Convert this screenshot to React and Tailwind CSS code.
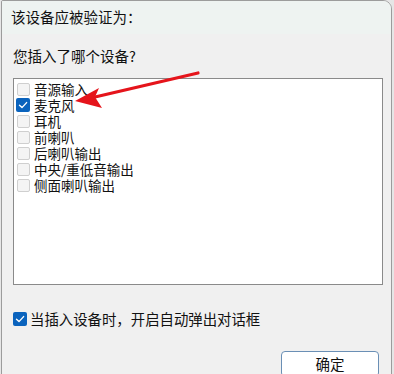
import React from "react";

const font = { fontFamily: '"Noto Sans CJK SC", "Microsoft YaHei", sans-serif' };

function Box({ checked }) {
  if (checked) {
    return (
      <span className="w-[14px] h-[14px] rounded-[2px] bg-[#0a63bd] flex items-center justify-center shrink-0">
        <svg width="10" height="10" viewBox="0 0 10 10">
          <path d="M1.5 5.2 L4 7.6 L8.6 2.6" fill="none" stroke="#fff" strokeWidth="1.4" strokeLinecap="round" strokeLinejoin="round" />
        </svg>
      </span>
    );
  }
  return <span className="w-[13px] h-[13px] rounded-[2px] border border-[#cfcfcf] bg-[#f4f4f4] shrink-0" />;
}

const items = [
  ["音源输入", false],
  ["麦克风", true],
  ["耳机", false],
  ["前喇叭", false],
  ["后喇叭输出", false],
  ["中央/重低音输出", false],
  ["侧面喇叭输出", false],
];

export default function App() {
  return (
    <div className="w-[394px] h-[374px] bg-[#e6e6e6] overflow-hidden relative" style={font}>
      <div className="ml-[1px] w-[391px] h-[380px] border border-[#9c9c9c] rounded-tr-[9px] rounded-tl-[2px] overflow-hidden bg-[#f0f0f0] flex flex-col">
        <div className="h-[33px] bg-[#eef3f1] pl-[9px] pt-[6px] text-[14.5px] leading-[20px] text-[#111]">
          该设备应被验证为：
        </div>
        <div className="px-[11px] flex flex-col">
          <div className="mt-[12px] text-[14.5px] leading-[20px] text-[#111]">您插入了哪个设备?</div>
          <div className="mt-[12px] w-[370px] h-[207px] border border-[#8a8a8a] bg-white pt-[2px] pl-[2px]">
            {items.map(([t, c]) => (
              <div key={t} className="h-[16px] flex items-center gap-[4px] text-[13.5px] leading-[16px] text-[#111]">
                <span className="w-[14px] flex justify-center"><Box checked={c} /></span>
                <span className="leading-[16px]">{t}</span>
              </div>
            ))}
          </div>
          <div className="mt-[25px] flex items-center gap-[3px] text-[14.4px] leading-[18px] text-[#111]">
            <Box checked />
            <span>当插入设备时，开启自动弹出对话框</span>
          </div>
          <div className="mt-[23px] flex justify-end pr-[1px]">
            <div className="w-[98px] h-[26px] border border-[#6a8fb5] rounded-[4px] bg-white flex items-center justify-center text-[14.5px] text-[#111]">
              确定
            </div>
          </div>
        </div>
      </div>
      <svg className="absolute left-0 top-0" width="394" height="374" viewBox="0 0 394 374">
        <line x1="198" y1="73" x2="95" y2="97" stroke="#e5141b" strokeWidth="3.2" strokeLinecap="round" />
        <path d="M75 101 L99 88 L95 97 L102 108 Z" fill="#e5141b" />
      </svg>
    </div>
  );
}
